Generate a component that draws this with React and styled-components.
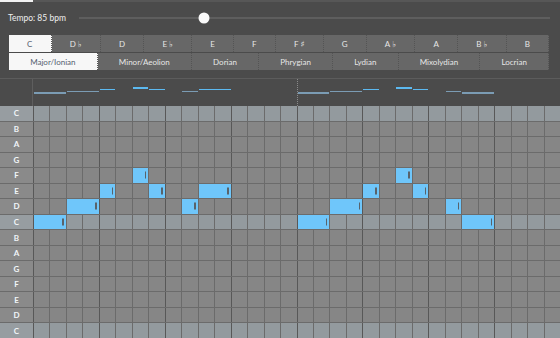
import styled, { createGlobalStyle } from "styled-components";

const GlobalStyle = createGlobalStyle`
html, body {
  margin: 0;
  padding: 0;
  background: #4b4b4b;
  overflow: hidden;
}
body {
  font-family: Lato, "Open Sans", sans-serif;
}
`

// [letter, accidental]
const KEYS = [["C"], ["D", "♭"], ["D"], ["E", "♭"], ["E"], ["F"], ["F", "♯"], ["G"], ["A", "♭"], ["A"], ["B", "♭"], ["B"]];
const MODES = ["Major/Ionian", "Minor/Aeolion", "Dorian", "Phrygian", "Lydian", "Mixolydian", "Locrian"];
const ROWS = ["C", "B", "A", "G", "F", "E", "D", "C", "B", "A", "G", "F", "E", "D", "C"];

// [row, col, length]
const NOTES = [
  [7, 0, 2], [6, 2, 2], [5, 4, 1], [4, 6, 1], [5, 7, 1], [6, 9, 1], [5, 10, 2],
  [7, 16, 2], [6, 18, 2], [5, 20, 1], [4, 22, 1], [5, 23, 1], [6, 25, 1], [7, 26, 2],
];

const Page = styled.div`
width: 560px;
height: 338px;
display: flex;
flex-direction: column;
background: #4b4b4b;
`

const TopStrip = styled.div`
height: 2px;
display: flex;
background: #575757;
`

const TopTab = styled.div`
width: 33px;
background: #f2f2f2;
`

const TempoRow = styled.div`
height: 31px;
display: flex;
align-items: center;
gap: 13px;
padding: 0 10px 0 8px;
`

const TempoLabel = styled.span`
color: #eeeeee;
font-size: 8.5px;
white-space: nowrap;
`

const Track = styled.div`
flex: 1;
height: 2px;
background: #5e5e5e;
position: relative;
`

const Thumb = styled.div`
position: absolute;
top: 50%;
width: 11px;
height: 11px;
border-radius: 50%;
background: #fafafa;
transform: translate(-50%, -50%);
`

const Controls = styled.div`
display: flex;
flex-direction: column;
gap: 1px;
padding: 2px 11px 0 9px;
`

const ButtonRow = styled.div`
display: flex;
height: 17px;
`

const Choice = styled.div`
flex: 1 1 auto;
display: flex;
align-items: center;
justify-content: center;
box-sizing: border-box;
border-right: 1px dotted #545454;
background: ${(p) => (p.$active ? "#f7f7f7" : "#676767")};
color: ${(p) => (p.$active ? "#556170" : "#e6e6e6")};
font-size: 8px;
white-space: nowrap;
padding: 0 6px;
`

const Accidental = styled.span`
font-family: "DejaVu Sans", sans-serif;
font-size: 8.5px;
font-weight: bold;
margin-left: 2px;
`

const Preview = styled.div`
margin-top: 8px;
height: 28px;
box-sizing: border-box;
border-top: 1px solid #5c5c5c;
display: grid;
grid-template-columns: 33px repeat(32, 1fr);
column-gap: 1px;
`

const PreviewCorner = styled.div`
grid-row: 1;
grid-column: 1;
border-right: 1px solid #5e5e5e;
`

const MeasureMark = styled.div`
grid-row: 1;
grid-column: ${(p) => p.$col + 2};
margin-left: -1px;
border-left: 1px dotted #8a8a8a;
`

const MiniNote = styled.div`
grid-row: 1;
grid-column: ${(p) => `${p.$col + 2} / span ${p.$len}`};
align-self: start;
height: 1.5px;
margin-top: ${(p) => p.$row * 1.72 + 1.2}px;
background: ${(p) => (p.$row >= 6 ? "#7b9cb4" : "#5cb9f0")};
`

const Roll = styled.div`
flex: 1;
display: grid;
grid-template-columns: 33px repeat(32, 1fr);
grid-template-rows: repeat(15, 1fr);
gap: 1px;
background: #6b6b6b;
`

const RowLabel = styled.div`
grid-column: 1;
display: flex;
align-items: center;
justify-content: center;
background: ${(p) => (p.$root ? "#979da1" : "#8a8a8a")};
color: #f1f5f9;
font-size: 8px;
font-weight: bold;
box-shadow: 1px 0 0 #5c5c5c;
`

const Cell = styled.div`
background: ${(p) => (p.$root ? "#939a9e" : "#868686")};
box-shadow: ${(p) => (p.$beat ? "-1px 0 0 #585858" : "none")};
`

const Note = styled.div`
grid-row: ${(p) => p.$row + 1};
grid-column: ${(p) => `${p.$col + 2} / span ${p.$len}`};
background: #6fc6fa;
position: relative;
&::after {
  content: "";
  position: absolute;
  right: 2px;
  top: 50%;
  width: 1.5px;
  height: 7px;
  transform: translateY(-50%);
  background: #59636b;
}
`

function App() {
  const cells = [];
  ROWS.forEach((name, r) => {
    const root = name === "C";
    cells.push(<RowLabel key={`l${r}`} $root={root} style={{ gridRow: r + 1 }}>{name}</RowLabel>);
    for (let c = 0; c < 32; c++) {
      cells.push(
        <Cell key={`c${r}-${c}`} $root={root} $beat={c % 4 === 0} style={{ gridRow: r + 1, gridColumn: c + 2 }} />
      );
    }
  });

  return (
    <Page>
      <GlobalStyle />
      <TopStrip>
        <TopTab />
      </TopStrip>
      <TempoRow>
        <TempoLabel>Tempo: 85 bpm</TempoLabel>
        <Track>
          <Thumb style={{ left: "26.6%" }} />
        </Track>
      </TempoRow>
      <Controls>
        <ButtonRow>
          {KEYS.map(([letter, acc], i) => (
            <Choice key={letter + (acc || "")} $active={i === 0}>
              {letter}
              {acc && <Accidental>{acc}</Accidental>}
            </Choice>
          ))}
        </ButtonRow>
        <ButtonRow>
          {MODES.map((m, i) => (
            <Choice key={m} $active={i === 0}>{m}</Choice>
          ))}
        </ButtonRow>
      </Controls>
      <Preview>
        <PreviewCorner />
        <MeasureMark $col={16} />
        {NOTES.map(([row, col, len]) => (
          <MiniNote key={`m${row}-${col}`} $row={row} $col={col} $len={len} />
        ))}
      </Preview>
      <Roll>
        {cells}
        {NOTES.map(([row, col, len]) => (
          <Note key={`n${row}-${col}`} $row={row} $col={col} $len={len} />
        ))}
      </Roll>
    </Page>
  );
}

export default App;
